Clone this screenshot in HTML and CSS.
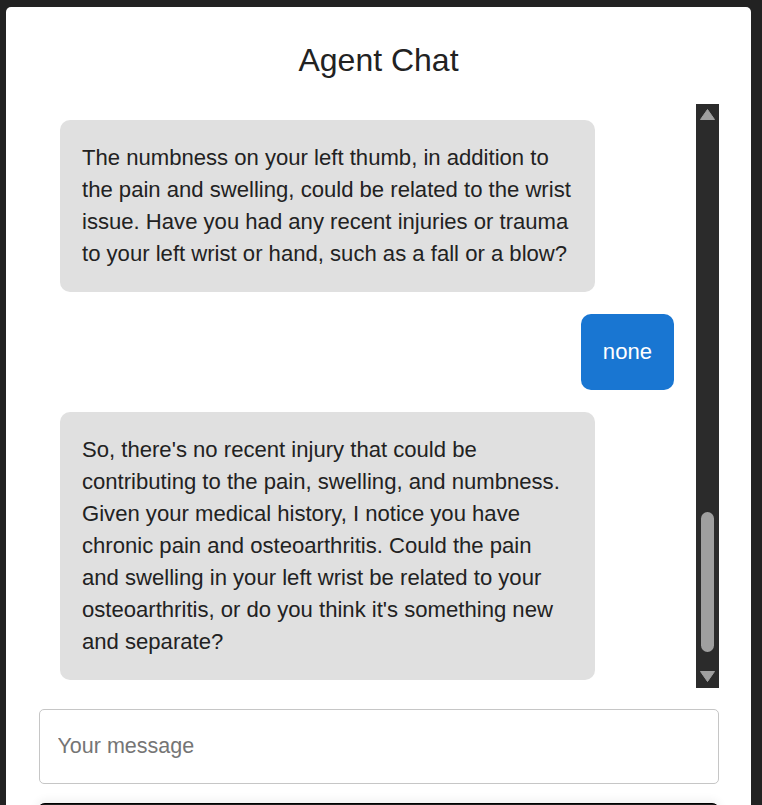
FILE: index.html
```html
<!DOCTYPE html>
<html lang="en">
<head>
<meta charset="utf-8">
<title>Agent Chat</title>
<link rel="stylesheet" href="styles.css">
</head>
<body>
<main class="card">
  <h2 class="title">Agent Chat</h2>
  <section class="chat-area">
    <div class="messages">
      <div class="msg agent">The numbness on your left thumb, in addition to the pain and swelling, could be related to the wrist issue. Have you had any recent injuries or trauma to your left wrist or hand, such as a fall or a blow?</div>
      <div class="msg user">none</div>
      <div class="msg agent">So, there's no recent injury that could be contributing to the pain, swelling, and numbness. Given your medical history, I notice you have chronic pain and osteoarthritis. Could the pain and swelling in your left wrist be related to your osteoarthritis, or do you think it's something new and separate?</div>
    </div>
    <div class="scrollbar" aria-hidden="true">
      <div class="sb-button">
        <svg width="15" height="11" viewBox="0 0 15 11"><path d="M7.5 0.5 L14.5 10.5 L0.5 10.5 Z" fill="#a0a0a0" stroke="#a0a0a0" stroke-linejoin="round" stroke-width="1"/></svg>
      </div>
      <div class="sb-track">
        <div class="sb-thumb"></div>
      </div>
      <div class="sb-button">
        <svg width="15" height="11" viewBox="0 0 15 11"><path d="M0.5 0.5 L14.5 0.5 L7.5 10.5 Z" fill="#a0a0a0" stroke="#a0a0a0" stroke-linejoin="round" stroke-width="1"/></svg>
      </div>
    </div>
  </section>
  <form class="composer">
    <input class="composer-input" type="text" placeholder="Your message">
    <button class="send" type="button">Send</button>
  </form>
</main>
</body>
</html>
```

FILE: styles.css
```css
html {
  overflow: hidden;
  height: 100%;
}

body {
  margin: 0;
  padding: 7px 11px 0 6px;
  background: #222222;
  font-family: "Liberation Sans", Arial, sans-serif;
  color: #222222;
}

.card {
  background: #ffffff;
  border-radius: 5px;
  padding: 35.4px 32.5px 40px;
  display: flex;
  flex-direction: column;
}

.title {
  margin: 0 0 24.6px;
  font-size: 32px;
  line-height: 37px;
  font-weight: 400;
  text-align: center;
  color: #222222;
}

.chat-area {
  height: 584px;
  display: flex;
}

.messages {
  flex: 1;
  min-width: 0;
  display: flex;
  flex-direction: column;
  gap: 22px;
  padding: 16px 21.5px 0;
  overflow: hidden;
}

.msg {
  font-size: 22.1px;
  line-height: 32px;
  padding: 22px;
  border-radius: 10px;
  max-width: 80%;
}

.agent {
  align-self: flex-start;
  background: #e0e0e0;
  color: #222222;
}

.user {
  align-self: flex-end;
  background: #1976d2;
  color: #ffffff;
}

.scrollbar {
  width: 23px;
  flex-shrink: 0;
  background: #2b2b2b;
  display: flex;
  flex-direction: column;
}

.sb-button {
  height: 22px;
  display: flex;
  align-items: center;
  justify-content: center;
  padding-left: 1px;
}

.sb-track {
  flex: 1;
  display: flex;
  flex-direction: column;
  align-items: center;
  padding-top: 386px;
  padding-left: 1px;
}

.sb-thumb {
  width: 13px;
  height: 140px;
  border-radius: 7px;
  background: #9f9f9f;
}

.composer {
  margin: 21px 0 0;
  display: flex;
  flex-direction: column;
  gap: 19px;
}

.composer-input {
  box-sizing: border-box;
  height: 75px;
  width: 100%;
  margin: 0;
  padding: 0 18px;
  border: 1px solid #c6c6c6;
  border-radius: 5px;
  background: #ffffff;
  font-family: "Liberation Sans", Arial, sans-serif;
  font-size: 21.5px;
  color: #222222;
  outline: none;
}

.composer-input::placeholder {
  color: #757575;
}

.send {
  margin: 0 -1.5px;
  height: 58px;
  border: 1.5px solid #000000;
  border-radius: 8px;
  background: #1f1f1f;
  color: #ffffff;
  font-family: "Liberation Sans", Arial, sans-serif;
  font-size: 21.33px;
  box-shadow: 0 -3px 10px rgba(0, 0, 0, 0.06);
}
```
